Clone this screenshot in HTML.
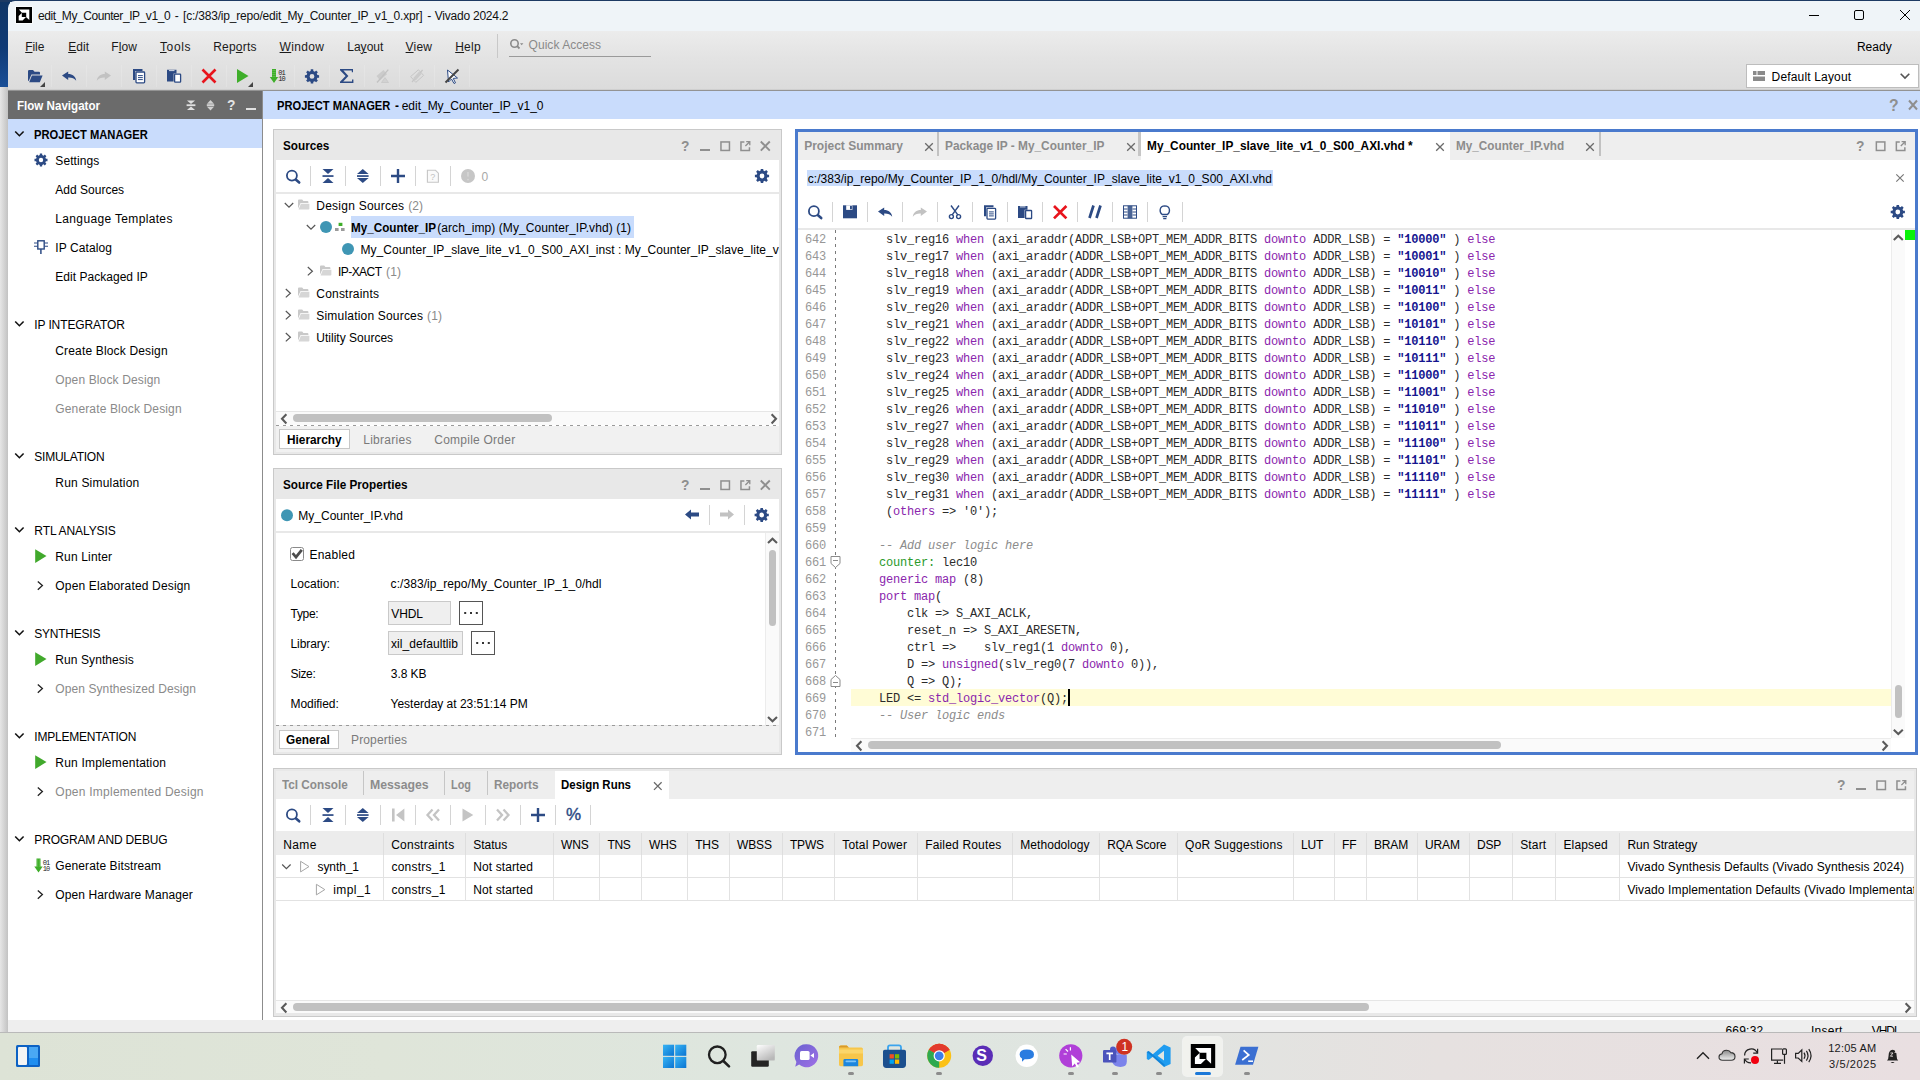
<!DOCTYPE html>
<html><head><meta charset="utf-8"><title>Vivado</title>
<style>
*{box-sizing:border-box;margin:0;padding:0}
html,body{width:1920px;height:1080px;overflow:hidden;background:#eeeeee;font-family:"Liberation Sans",Arial,sans-serif;font-size:12px;color:#000}
.b,.a{position:absolute}
.a{white-space:nowrap;line-height:14px}
svg{position:absolute;overflow:visible}
u{text-decoration:underline;text-underline-offset:1px;text-decoration-thickness:1px}
.mono{font-family:"Liberation Mono","Courier New",monospace;font-size:12px;letter-spacing:-0.2px;white-space:pre;color:#2b2b2b}
.kw{color:#8a25ad}
.num{color:#14148f;font-weight:bold}
.cm{color:#8c8c8c;font-style:italic}
.lbl{color:#2a9a2a}
</style></head><body>
<div class="b" style="left:0px;top:0px;width:8px;height:1033px;background:linear-gradient(90deg,#e6e6e6,#c2c2c2)"></div>
<div class="b" style="left:0px;top:0px;width:10px;height:87px;background:linear-gradient(180deg,#0f3565 0%,#0f3a75 55%,#1a4f97 100%)"></div>
<div class="b" style="left:0px;top:0px;width:1920px;height:2px;background:#1d3a63"></div>
<div class="b" style="left:8px;top:1px;width:1912px;height:30px;background:#eff4f8;border-top-left-radius:7px"></div>
<svg style="left:16px;top:7px" width="16" height="16" viewBox="0 0 16 16"><rect x="-0.7" y="-0.7" width="17.4" height="17.4" fill="#fff"/><rect width="16" height="16" fill="#000"/><path d="M2.9 2.6H13.3V13.1L10.2 10.2V5.8H5.9Z M2.7 8.9L5.8 6V10H10L6.6 13.4H2.7Z" fill="#fff"/></svg>
<div class="a" style="left:38.00px;top:9.00px;letter-spacing:-0.432px;color:#111;">edit_My_Counter_IP_v1_0</div>
<div class="a" style="left:174.80px;top:9.00px;letter-spacing:0.160px;color:#111;">-</div>
<div class="a" style="left:183.00px;top:9.00px;letter-spacing:-0.199px;color:#111;">[c:/383/ip_repo/edit_My_Counter_IP_v1_0.xpr]</div>
<div class="a" style="left:427.20px;top:9.00px;letter-spacing:0.160px;color:#111;">-</div>
<div class="a" style="left:434.80px;top:9.00px;letter-spacing:-0.233px;color:#111;">Vivado 2024.2</div>
<svg style="left:1808px;top:9px" width="12" height="12" viewBox="0 0 12 12"><path d="M1 6.5H11" stroke="#000" stroke-width="1" fill="none"/></svg>
<svg style="left:1853px;top:9px" width="12" height="12" viewBox="0 0 12 12"><rect x="1.5" y="1.5" width="9" height="9" rx="1.5" stroke="#000" stroke-width="1" fill="none"/></svg>
<svg style="left:1899px;top:9px" width="12" height="12" viewBox="0 0 12 12"><path d="M1 1L11 11M11 1L1 11" stroke="#000" stroke-width="1" fill="none"/></svg>
<div class="b" style="left:8px;top:31px;width:1912px;height:60px;background:linear-gradient(180deg,#ececec 0%,#e3e3e3 45%,#dbdbdb 100%)"></div>
<div class="b" style="left:8px;top:89px;width:1912px;height:1px;background:#cfcfcf"></div>
<div class="b" style="left:8px;top:90px;width:1912px;height:1px;background:#939393"></div>
<div class="a" style="left:25.20px;top:40.00px;letter-spacing:-0.050px;color:#1a1a1a;"><u>F</u>ile</div>
<div class="a" style="left:68.20px;top:40.00px;letter-spacing:0.100px;color:#1a1a1a;"><u>E</u>dit</div>
<div class="a" style="left:111.20px;top:40.00px;letter-spacing:0.150px;color:#1a1a1a;">F<u>l</u>ow</div>
<div class="a" style="left:160.00px;top:40.00px;letter-spacing:0.600px;color:#1a1a1a;"><u>T</u>ools</div>
<div class="a" style="left:213.20px;top:40.00px;letter-spacing:0.200px;color:#1a1a1a;">Rep<u>o</u>rts</div>
<div class="a" style="left:279.60px;top:40.00px;letter-spacing:0.340px;color:#1a1a1a;"><u>W</u>indow</div>
<div class="a" style="left:347.20px;top:40.00px;letter-spacing:0.030px;color:#1a1a1a;">La<u>y</u>out</div>
<div class="a" style="left:405.60px;top:40.00px;letter-spacing:0.183px;color:#1a1a1a;"><u>V</u>iew</div>
<div class="a" style="left:455.20px;top:40.00px;letter-spacing:0.233px;color:#1a1a1a;"><u>H</u>elp</div>
<div class="b" style="left:497px;top:34px;width:1px;height:24px;background:#c8c8c8"></div>
<svg style="left:509px;top:38px" width="14" height="14" viewBox="0 0 14 14"><circle cx="5.5" cy="5.5" r="3.7" stroke="#8a8a8a" stroke-width="1.6" fill="none"/><path d="M8.2 8.2L10.5 10.5" stroke="#8a8a8a" stroke-width="1.8"/><path d="M11 5.2h3.4l-1.7 2.1z" fill="#8a8a8a"/></svg>
<div class="a" style="left:528.60px;top:38.00px;letter-spacing:0.032px;color:#8a8a8a;">Quick Access</div>
<div class="b" style="left:509px;top:56px;width:142px;height:1px;background:#9a9a9a"></div>
<div class="a" style="left:1856.90px;top:40.00px;letter-spacing:0.050px;">Ready</div>
<svg style="left:0;top:0" width="1" height="1"><g transform="translate(28,70)"><path d="M0 1.2Q0 0 1.2 0H5L6.6 1.8H11Q12 1.8 12 2.8V4.6H3.4L0.8 11Q0 11 0 10Z" fill="#2c4a84"/><path d="M3.9 5.6H14.6L11.8 12.2H1.2Z" fill="#2c4a84"/></g></svg>
<svg style="left:0;top:0" width="1" height="1"><path d="M45 82V87H40Z" fill="#444"/></svg>
<svg style="left:0;top:0" width="1" height="1"><g transform="translate(62,71.5)"><path d="M0 4L6.2 0V2.6C10.5 2.6 13.6 5 14.2 9.2C12.3 6.6 9.8 5.8 6.2 5.9V8.4Z" fill="#2c4a84"/></g></svg>
<svg style="left:0;top:0" width="1" height="1"><g transform="translate(111,71.5) scale(-1,1)"><path d="M0 4L6.2 0V2.6C10.5 2.6 13.6 5 14.2 9.2C12.3 6.6 9.8 5.8 6.2 5.9V8.4Z" fill="#c2c2c2"/></g></svg>
<svg style="left:0;top:0" width="1" height="1"><g transform="translate(133,69)"><path d="M0 0H9.5V2H2.2V11H0Z" fill="#2c4a84"/><rect x="3" y="3" width="8.6" height="10.8" rx="0.8" fill="#fff" stroke="#2c4a84" stroke-width="1.3"/><path d="M5 6.6H9.8M5 8.6H9.8M5 10.6H9.8" stroke="#2c4a84" stroke-width="1"/></g></svg>
<svg style="left:0;top:0" width="1" height="1"><g transform="translate(167,69)"><path d="M0 0.8H9.5V4.4H6.6V12.6H0Z" fill="#2c4a84"/><path d="M2 1.6H7.5" stroke="#fff" stroke-width="0.8"/><rect x="7.6" y="5.2" width="6" height="8" rx="0.6" fill="#fff" stroke="#2c4a84" stroke-width="1.3"/></g></svg>
<svg style="left:0;top:0" width="1" height="1"><path d="M202.5 69.5L215.5 82.5M215.5 69.5L202.5 82.5" stroke="#e8141c" stroke-width="2.6" fill="none"/></svg>
<svg style="left:0;top:0" width="1" height="1"><path d="M237 69L248.5 76.0L237 83Z" fill="#3fae2a"/></svg>
<svg style="left:0;top:0" width="1" height="1"><path d="M253 82V87H248Z" fill="#444"/></svg>
<svg style="left:0;top:0" width="1" height="1"><g transform="translate(270,69)"><path d="M2 0H6V8H8.2L4 14L-0.2 8H2Z" fill="#3fae2a"/><path d="M2.6 1.5H5.4M2.6 3.5H5.4M2.6 5.5H5.4M2.6 7.5H5.4" stroke="#7fd06a" stroke-width="0.8" stroke-dasharray="1 0.8"/><text x="8.2" y="6.2" font-family="Liberation Mono,monospace" font-size="7" fill="#1a1a1a" letter-spacing="-0.9">01</text><text x="8.2" y="12.2" font-family="Liberation Mono,monospace" font-size="7" fill="#1a1a1a" letter-spacing="-0.9">10</text></g></svg>
<svg style="left:0;top:0" width="1" height="1"><path d="M319.09,75.16 L319.09,77.64 L317.38,77.74 L316.75,79.26 L317.89,80.54 L316.14,82.29 L314.86,81.15 L313.34,81.78 L313.24,83.49 L310.76,83.49 L310.66,81.78 L309.14,81.15 L307.86,82.29 L306.11,80.54 L307.25,79.26 L306.62,77.74 L304.91,77.64 L304.91,75.16 L306.62,75.06 L307.25,73.54 L306.11,72.26 L307.86,70.51 L309.14,71.65 L310.66,71.02 L310.76,69.31 L313.24,69.31 L313.34,71.02 L314.86,71.65 L316.14,70.51 L317.89,72.26 L316.75,73.54 L317.38,75.06ZM314.38,76.4A2.38,2.38 0 1 0 309.62,76.4A2.38,2.38 0 1 0 314.38,76.4Z" fill="#2c4a84" fill-rule="evenodd"/></svg>
<svg style="left:0;top:0" width="1" height="1"><path d="M340 69H353V72.2H351.8V70.6H343.4L348.4 76L343.2 81.4H352V79.6H353.4V83H340V81.8L345.6 76L340 70.2Z" fill="#2c4a84"/></svg>
<svg style="left:0;top:0" width="1" height="1"><g><path d="M376.5 76L383.5 70L387 74.2L380 80.2Z" fill="#cbcbcb"/><path d="M377 82.5L388.3 69.6" stroke="#c2c2c2" stroke-width="1.4" fill="none"/><path d="M381.5 82.5H388.5L385 77.6Z" fill="#d2d2d2" stroke="#c6c6c6" stroke-width="0.8"/></g></svg>
<svg style="left:0;top:0" width="1" height="1"><g fill="none" stroke="#c6c6c6"><path d="M410.6 76.6L418.4 69.8L423.6 75.4L415.8 82.4Z" stroke-width="1"/><path d="M412 82L422.6 70" stroke-width="1.2"/><path d="M414.4 79.4L420.2 72.8" stroke-width="3.4" stroke="#cbcbcb"/></g></svg>
<svg style="left:0;top:0" width="1" height="1"><path d="M447.5 70L448.5 82L451.5 79L454 83.5L455.5 82.8L453.2 78.4L457.5 78Z" fill="#fff" stroke="#2c4a84" stroke-width="1"/><path d="M445.5 82.5L458.5 69.5" stroke="#444" stroke-width="2"/></svg>
<div class="b" style="left:51px;top:65px;width:1px;height:22px;background:rgba(255,255,255,0.16)"></div>
<div class="b" style="left:86px;top:65px;width:1px;height:22px;background:rgba(255,255,255,0.16)"></div>
<div class="b" style="left:121px;top:65px;width:1px;height:22px;background:rgba(255,255,255,0.16)"></div>
<div class="b" style="left:156px;top:65px;width:1px;height:22px;background:rgba(255,255,255,0.16)"></div>
<div class="b" style="left:191px;top:65px;width:1px;height:22px;background:rgba(255,255,255,0.16)"></div>
<div class="b" style="left:226px;top:65px;width:1px;height:22px;background:rgba(255,255,255,0.16)"></div>
<div class="b" style="left:294px;top:65px;width:1px;height:22px;background:rgba(255,255,255,0.16)"></div>
<div class="b" style="left:329px;top:65px;width:1px;height:22px;background:rgba(255,255,255,0.16)"></div>
<div class="b" style="left:364px;top:65px;width:1px;height:22px;background:rgba(255,255,255,0.16)"></div>
<div class="b" style="left:399px;top:65px;width:1px;height:22px;background:rgba(255,255,255,0.16)"></div>
<div class="b" style="left:434px;top:65px;width:1px;height:22px;background:rgba(255,255,255,0.16)"></div>
<div class="b" style="left:469px;top:65px;width:1px;height:22px;background:rgba(255,255,255,0.16)"></div>
<div class="b" style="left:1746px;top:64px;width:173px;height:24px;background:#fff;border:1px solid #bdbdbd"></div>
<svg style="left:1753px;top:71px" width="12" height="10" viewBox="0 0 12 10"><rect x="0" y="0" width="3.5" height="4" fill="#8a8a8a"/><rect x="4.5" y="0" width="7.5" height="4" fill="#8a8a8a"/><rect x="0" y="5.5" width="12" height="4.5" fill="#8a8a8a"/></svg>
<div class="a" style="left:1771.60px;top:69.80px;letter-spacing:0.160px;">Default Layout</div>
<svg style="left:1900px;top:73px" width="10" height="6" viewBox="0 0 10 6"><path d="M0.7 0.7L5 5L9.3 0.7" stroke="#555" stroke-width="1.6" fill="none"/></svg>
<div class="b" style="left:8px;top:91px;width:255px;height:929px;background:#fff"></div>
<div class="b" style="left:262px;top:91px;width:1px;height:929px;background:#8c8c8c"></div>
<div class="b" style="left:8px;top:91px;width:254px;height:28px;background:#6b6b6b"></div>
<div class="a" style="left:17.00px;top:99.00px;font-weight:bold;transform:scaleX(0.9651);transform-origin:0 0;color:#fff;">Flow Navigator</div>
<svg style="left:0;top:0" width="1" height="1"><g fill="#e0e0e0"><path d="M187 100.5h8l-4 3.6z"/><rect x="186.6" y="104.3" width="8.8" height="1.8"/><path d="M187 110h8l-4-3.6z"/></g></svg>
<svg style="left:0;top:0" width="1" height="1"><g fill="#d0d0d0"><path d="M207 103.8h7l-3.5-3.8z"/><rect x="206.8" y="104.2" width="7.4" height="2"/><path d="M207 106.8h7l-3.5 3.8z"/></g></svg>
<div class="a" style="left:226.60px;top:98.31px;font-size:14px;font-weight:bold;transform:scaleX(0.9850);transform-origin:0 0;color:#e4e4e4;">?</div>
<div class="b" style="left:246px;top:108px;width:10px;height:2px;background:#e0e0e0"></div>
<div class="b" style="left:8px;top:119px;width:254px;height:29px;background:#c9dcfc"></div>
<svg style="left:0;top:0" width="1" height="1"><path d="M15.2 131.5L19.4 135.7L23.6 131.5" stroke="#111" stroke-width="1.6" fill="none"/></svg>
<div class="a" style="left:34.30px;top:128.00px;font-weight:bold;transform:scaleX(0.9320);transform-origin:0 0;">PROJECT MANAGER</div>
<div class="a" style="left:55.30px;top:154.00px;letter-spacing:0.093px;">Settings</div>
<svg style="left:0;top:0" width="1" height="1"><path d="M47.50,158.87 L47.50,161.13 L45.93,161.23 L45.35,162.62 L46.40,163.80 L44.80,165.40 L43.62,164.35 L42.23,164.93 L42.13,166.50 L39.87,166.50 L39.77,164.93 L38.38,164.35 L37.20,165.40 L35.60,163.80 L36.65,162.62 L36.07,161.23 L34.50,161.13 L34.50,158.87 L36.07,158.77 L36.65,157.38 L35.60,156.20 L37.20,154.60 L38.38,155.65 L39.77,155.07 L39.87,153.50 L42.13,153.50 L42.23,155.07 L43.62,155.65 L44.80,154.60 L46.40,156.20 L45.35,157.38 L45.93,158.77ZM43.18,160A2.18,2.18 0 1 0 38.82,160A2.18,2.18 0 1 0 43.18,160Z" fill="#2c4a84" fill-rule="evenodd"/></svg>
<div class="a" style="left:55.30px;top:183.00px;letter-spacing:0.010px;">Add Sources</div>
<div class="a" style="left:55.30px;top:212.00px;letter-spacing:0.347px;">Language Templates</div>
<div class="a" style="left:55.30px;top:241.00px;letter-spacing:0.089px;">IP Catalog</div>
<svg style="left:0;top:0" width="1" height="1"><g stroke="#2c4a84" fill="none" stroke-width="1.4"><rect x="37.8" y="240.8" width="6.4" height="8.2"/><path d="M40.9 249V254" stroke-width="1.5"/><path d="M34 243h3.4M34 246.3h3.4M44.6 243h3.4M44.6 246.3h3.4" stroke-width="1.1"/></g></svg>
<div class="a" style="left:55.30px;top:270.00px;letter-spacing:0.030px;">Edit Packaged IP</div>
<svg style="left:0;top:0" width="1" height="1"><path d="M15.2 321.5L19.4 325.7L23.6 321.5" stroke="#111" stroke-width="1.6" fill="none"/></svg>
<div class="a" style="left:34.30px;top:318.00px;letter-spacing:-0.117px;">IP INTEGRATOR</div>
<div class="a" style="left:55.30px;top:344.00px;letter-spacing:0.161px;">Create Block Design</div>
<div class="a" style="left:55.30px;top:373.00px;letter-spacing:0.134px;color:#8a8a8a;">Open Block Design</div>
<div class="a" style="left:55.30px;top:402.00px;letter-spacing:0.145px;color:#8a8a8a;">Generate Block Design</div>
<svg style="left:0;top:0" width="1" height="1"><path d="M15.2 453.5L19.4 457.7L23.6 453.5" stroke="#111" stroke-width="1.6" fill="none"/></svg>
<div class="a" style="left:34.30px;top:450.00px;letter-spacing:-0.239px;">SIMULATION</div>
<div class="a" style="left:55.30px;top:476.00px;letter-spacing:0.192px;">Run Simulation</div>
<svg style="left:0;top:0" width="1" height="1"><path d="M15.2 527.5L19.4 531.7L23.6 527.5" stroke="#111" stroke-width="1.6" fill="none"/></svg>
<div class="a" style="left:34.30px;top:524.00px;letter-spacing:-0.091px;">RTL ANALYSIS</div>
<div class="a" style="left:55.30px;top:550.00px;letter-spacing:0.150px;">Run Linter</div>
<svg style="left:0;top:0" width="1" height="1"><path d="M35.2 549.3L46.5 556.0999999999999L35.2 562.9Z" fill="#41a92c"/></svg>
<div class="a" style="left:55.30px;top:579.00px;letter-spacing:0.169px;">Open Elaborated Design</div>
<svg style="left:0;top:0" width="1" height="1"><path d="M37.8 581.4L42.4 585.6L37.8 589.8" stroke="#222" stroke-width="1.3" fill="none"/></svg>
<svg style="left:0;top:0" width="1" height="1"><path d="M15.2 630.5L19.4 634.7L23.6 630.5" stroke="#111" stroke-width="1.6" fill="none"/></svg>
<div class="a" style="left:34.30px;top:627.00px;letter-spacing:-0.237px;">SYNTHESIS</div>
<div class="a" style="left:55.30px;top:653.00px;letter-spacing:0.083px;">Run Synthesis</div>
<svg style="left:0;top:0" width="1" height="1"><path d="M35.2 652.3L46.5 659.0999999999999L35.2 665.9Z" fill="#41a92c"/></svg>
<div class="a" style="left:55.30px;top:682.00px;letter-spacing:0.089px;color:#8a8a8a;">Open Synthesized Design</div>
<svg style="left:0;top:0" width="1" height="1"><path d="M37.8 684.4L42.4 688.6L37.8 692.8" stroke="#222" stroke-width="1.3" fill="none"/></svg>
<svg style="left:0;top:0" width="1" height="1"><path d="M15.2 733.5L19.4 737.7L23.6 733.5" stroke="#111" stroke-width="1.6" fill="none"/></svg>
<div class="a" style="left:34.30px;top:730.00px;letter-spacing:-0.215px;">IMPLEMENTATION</div>
<div class="a" style="left:55.30px;top:756.00px;letter-spacing:0.194px;">Run Implementation</div>
<svg style="left:0;top:0" width="1" height="1"><path d="M35.2 755.3L46.5 762.0999999999999L35.2 768.9Z" fill="#41a92c"/></svg>
<div class="a" style="left:55.30px;top:785.00px;letter-spacing:0.248px;color:#8a8a8a;">Open Implemented Design</div>
<svg style="left:0;top:0" width="1" height="1"><path d="M37.8 787.4L42.4 791.6L37.8 795.8" stroke="#222" stroke-width="1.3" fill="none"/></svg>
<svg style="left:0;top:0" width="1" height="1"><path d="M15.2 836.5L19.4 840.7L23.6 836.5" stroke="#111" stroke-width="1.6" fill="none"/></svg>
<div class="a" style="left:34.30px;top:833.00px;letter-spacing:-0.169px;">PROGRAM AND DEBUG</div>
<div class="a" style="left:55.30px;top:859.00px;letter-spacing:0.103px;">Generate Bitstream</div>
<svg style="left:0;top:0" width="1" height="1"><g transform="translate(34.5,858.5)"><path d="M2 0H6V8H8.2L4 14L-0.2 8H2Z" fill="#3fae2a"/><path d="M2.6 1.5H5.4M2.6 3.5H5.4M2.6 5.5H5.4M2.6 7.5H5.4" stroke="#7fd06a" stroke-width="0.8" stroke-dasharray="1 0.8"/><text x="8.2" y="6.2" font-family="Liberation Mono,monospace" font-size="7" fill="#1a1a1a" letter-spacing="-0.9">01</text><text x="8.2" y="12.2" font-family="Liberation Mono,monospace" font-size="7" fill="#1a1a1a" letter-spacing="-0.9">10</text></g></svg>
<div class="a" style="left:55.30px;top:888.00px;letter-spacing:0.105px;">Open Hardware Manager</div>
<svg style="left:0;top:0" width="1" height="1"><path d="M37.8 890.4L42.4 894.6L37.8 898.8" stroke="#222" stroke-width="1.3" fill="none"/></svg>
<div class="b" style="left:263px;top:91px;width:1657px;height:28px;background:#c9dcfc"></div>
<div class="b" style="left:263px;top:119px;width:1657px;height:901px;background:#fff"></div>
<div class="a" style="left:277.30px;top:99.00px;font-weight:bold;transform:scaleX(0.9287);transform-origin:0 0;">PROJECT MANAGER</div>
<div class="a" style="left:395.20px;top:99.00px;font-weight:bold;transform:scaleX(0.9850);transform-origin:0 0;">-</div>
<div class="a" style="left:401.70px;top:99.00px;letter-spacing:-0.014px;">edit_My_Counter_IP_v1_0</div>
<div class="a" style="left:1889.00px;top:98.52px;font-size:16px;font-weight:bold;transform:scaleX(0.9850);transform-origin:0 0;color:#8f8f8f;">?</div>
<svg style="left:0;top:0" width="1" height="1"><path d="M1909 100.5L1917 109.5M1917 100.5L1909 109.5" stroke="#8f8f8f" stroke-width="2" fill="none"/></svg>
<div class="b" style="left:273px;top:129px;width:509px;height:326px;background:#e8e8e8;border:1px solid #c9c9c9"></div>
<div class="a" style="left:283.00px;top:139.00px;font-weight:bold;transform:scaleX(0.9799);transform-origin:0 0;">Sources</div>
<div class="a" style="left:681.00px;top:139.11px;font-size:14px;font-weight:bold;transform:scaleX(0.9850);transform-origin:0 0;color:#8f8f8f;">?</div>
<div class="b" style="left:700px;top:149px;width:10px;height:2px;background:#8f8f8f"></div>
<svg style="left:0;top:0" width="1" height="1"><rect x="720.95" y="141.95" width="8.5" height="8.5" fill="none" stroke="#8f8f8f" stroke-width="1.5"/></svg>
<svg style="left:0;top:0" width="1" height="1"><path d="M744.4000000000001 141.95H740.95V150.45H749.45V147.2" fill="none" stroke="#8f8f8f" stroke-width="1.5"/><path d="M745.4000000000001 146.0L749.2 142.2M746.2 141.6H749.8000000000001V145.2" fill="none" stroke="#8f8f8f" stroke-width="1.3"/></svg>
<svg style="left:0;top:0" width="1" height="1"><path d="M760.8000000000001 141.5L769.8000000000001 150.7M769.8000000000001 141.5L760.8000000000001 150.7" stroke="#8f8f8f" stroke-width="1.9" fill="none"/></svg>
<div class="b" style="left:276px;top:160px;width:503px;height:32px;background:#fff"></div>
<div class="b" style="left:276px;top:194px;width:503px;height:232px;background:#fff"></div>
<svg style="left:0;top:0" width="1" height="1"><circle cx="291.9" cy="175.6" r="5" fill="none" stroke="#2c4a84" stroke-width="1.8"/><path d="M296 179.7L299.2 182.5" stroke="#2c4a84" stroke-width="2.6" stroke-linecap="round"/></svg>
<div class="b" style="left:310px;top:166px;width:1px;height:20px;background:#d4d4d4"></div>
<svg style="left:0;top:0" width="1" height="1"><g fill="#2c4a84"><path d="M322.5 169h11l-5.5 5z"/><rect x="322.5" y="175.2" width="11" height="1.7"/><path d="M322.5 183h11l-5.5 -5z"/></g></svg>
<div class="b" style="left:345px;top:166px;width:1px;height:20px;background:#d4d4d4"></div>
<svg style="left:0;top:0" width="1" height="1"><g fill="#2c4a84"><path d="M357 174h11.6l-5.8 -5z"/><rect x="357" y="175.2" width="11.6" height="1.7"/><path d="M357 178h11.6l-5.8 5z"/></g></svg>
<div class="b" style="left:380px;top:166px;width:1px;height:20px;background:#d4d4d4"></div>
<svg style="left:0;top:0" width="1" height="1"><path d="M391 176.0H405M398.0 169V183" stroke="#2c4a84" stroke-width="2.4" fill="none"/></svg>
<div class="b" style="left:415px;top:166px;width:1px;height:20px;background:#d4d4d4"></div>
<svg style="left:0;top:0" width="1" height="1"><path d="M427.4 170.3H435.5L438.4 173.2V182.3H427.4Z" fill="#fafafa" stroke="#c6c6c6" stroke-width="1.1"/></svg>
<div class="a" style="left:430.30px;top:170.04px;font-size:9px;letter-spacing:0.160px;color:#c2c2c2;">?</div>
<div class="b" style="left:450px;top:166px;width:1px;height:20px;background:#d4d4d4"></div>
<svg style="left:0;top:0" width="1" height="1"><circle cx="468" cy="176" r="7" fill="#c6c6c6"/><path d="M468 172v4.6" stroke="#d6d6d6" stroke-width="1.6"/><circle cx="468" cy="179.6" r="0.9" fill="#d6d6d6"/></svg>
<div class="a" style="left:481.50px;top:169.60px;letter-spacing:0.160px;color:#a8a8a8;">0</div>
<svg style="left:0;top:0" width="1" height="1"><path d="M769.09,174.76 L769.09,177.24 L767.38,177.34 L766.75,178.86 L767.89,180.14 L766.14,181.89 L764.86,180.75 L763.34,181.38 L763.24,183.09 L760.76,183.09 L760.66,181.38 L759.14,180.75 L757.86,181.89 L756.11,180.14 L757.25,178.86 L756.62,177.34 L754.91,177.24 L754.91,174.76 L756.62,174.66 L757.25,173.14 L756.11,171.86 L757.86,170.11 L759.14,171.25 L760.66,170.62 L760.76,168.91 L763.24,168.91 L763.34,170.62 L764.86,171.25 L766.14,170.11 L767.89,171.86 L766.75,173.14 L767.38,174.66ZM764.38,176A2.38,2.38 0 1 0 759.62,176A2.38,2.38 0 1 0 764.38,176Z" fill="#2c4a84" fill-rule="evenodd"/></svg>
<svg style="left:0;top:0" width="1" height="1"><path d="M284.8 203L289.0 207.2L293.2 203" stroke="#555" stroke-width="1.2" fill="none"/></svg>
<svg style="left:0;top:0" width="1" height="1"><g transform="translate(298,199.5)"><path d="M0 1Q0 0 1 0H4.2L5.4 1.4H9.5Q10.4 1.4 10.4 2.4V3.4H2.6L0 9Z" fill="#c9c9c9"/><path d="M2.9 4.2H11.4V9.3Q11.4 10 10.6 10H0.6Z" fill="#d6d6d6"/></g></svg>
<div class="a" style="left:316.30px;top:199.00px;letter-spacing:0.238px;">Design Sources</div>
<div class="a" style="left:408.20px;top:199.00px;letter-spacing:0.075px;color:#8a8a8a;">(2)</div>
<svg style="left:0;top:0" width="1" height="1"><path d="M306.8 225L311.0 229.2L315.2 225" stroke="#555" stroke-width="1.2" fill="none"/></svg>
<svg style="left:0;top:0" width="1" height="1"><circle cx="326" cy="227" r="6" fill="#3f96b4"/></svg>
<svg style="left:0;top:0" width="1" height="1"><rect x="338.6" y="222.8" width="3.8" height="3.2" fill="#3fae2a"/><rect x="335" y="228" width="3.6" height="3" fill="#9a9a9a"/><rect x="341" y="228" width="3.6" height="3" fill="#9a9a9a"/></svg>
<div class="b" style="left:351px;top:216px;width:283px;height:22px;background:#c9dcfc"></div>
<div class="a" style="left:351.20px;top:221.00px;font-weight:bold;transform:scaleX(0.9742);transform-origin:0 0;">My_Counter_IP</div>
<div class="a" style="left:437.20px;top:221.00px;letter-spacing:0.079px;">(arch_imp) (My_Counter_IP.vhd) (1)</div>
<svg style="left:0;top:0" width="1" height="1"><circle cx="348" cy="249" r="6" fill="#3f96b4"/></svg>
<div class="b" style="left:276px;top:238px;width:503px;height:22px;overflow:hidden">

<div class="a" style="left:84.40px;top:5.00px;letter-spacing:0.050px;">My_Counter_IP_slave_lite_v1_0_S00_AXI_inst : My_Counter_IP_slave_lite_v1_0_S00_AXI</div>
</div>
<svg style="left:0;top:0" width="1" height="1"><path d="M307.8 267L312.40000000000003 271.2L307.8 275.4" stroke="#555" stroke-width="1.2" fill="none"/></svg>
<svg style="left:0;top:0" width="1" height="1"><g transform="translate(320,265.5)"><path d="M0 1Q0 0 1 0H4.2L5.4 1.4H9.5Q10.4 1.4 10.4 2.4V3.4H2.6L0 9Z" fill="#c9c9c9"/><path d="M2.9 4.2H11.4V9.3Q11.4 10 10.6 10H0.6Z" fill="#d6d6d6"/></g></svg>
<div class="a" style="left:338.00px;top:265.00px;letter-spacing:-0.558px;">IP-XACT</div>
<div class="a" style="left:386.00px;top:265.00px;letter-spacing:0.175px;color:#8a8a8a;">(1)</div>
<svg style="left:0;top:0" width="1" height="1"><path d="M285.8 289L290.40000000000003 293.2L285.8 297.4" stroke="#555" stroke-width="1.2" fill="none"/></svg>
<svg style="left:0;top:0" width="1" height="1"><g transform="translate(298,287.5)"><path d="M0 1Q0 0 1 0H4.2L5.4 1.4H9.5Q10.4 1.4 10.4 2.4V3.4H2.6L0 9Z" fill="#c9c9c9"/><path d="M2.9 4.2H11.4V9.3Q11.4 10 10.6 10H0.6Z" fill="#d6d6d6"/></g></svg>
<div class="a" style="left:316.30px;top:287.00px;letter-spacing:0.200px;">Constraints</div>
<svg style="left:0;top:0" width="1" height="1"><path d="M285.8 311L290.40000000000003 315.2L285.8 319.4" stroke="#555" stroke-width="1.2" fill="none"/></svg>
<svg style="left:0;top:0" width="1" height="1"><g transform="translate(298,309.5)"><path d="M0 1Q0 0 1 0H4.2L5.4 1.4H9.5Q10.4 1.4 10.4 2.4V3.4H2.6L0 9Z" fill="#c9c9c9"/><path d="M2.9 4.2H11.4V9.3Q11.4 10 10.6 10H0.6Z" fill="#d6d6d6"/></g></svg>
<div class="a" style="left:316.30px;top:309.00px;letter-spacing:0.194px;">Simulation Sources</div>
<div class="a" style="left:427.00px;top:309.00px;letter-spacing:0.175px;color:#8a8a8a;">(1)</div>
<svg style="left:0;top:0" width="1" height="1"><path d="M285.8 333L290.40000000000003 337.2L285.8 341.4" stroke="#555" stroke-width="1.2" fill="none"/></svg>
<svg style="left:0;top:0" width="1" height="1"><g transform="translate(298,331.5)"><path d="M0 1Q0 0 1 0H4.2L5.4 1.4H9.5Q10.4 1.4 10.4 2.4V3.4H2.6L0 9Z" fill="#c9c9c9"/><path d="M2.9 4.2H11.4V9.3Q11.4 10 10.6 10H0.6Z" fill="#d6d6d6"/></g></svg>
<div class="a" style="left:316.30px;top:331.00px;letter-spacing:0.007px;">Utility Sources</div>
<div class="b" style="left:276px;top:411px;width:503px;height:14px;background:#fafafa;border-top:1px solid #e6e6e6"></div>
<div class="b" style="left:276px;top:426px;width:503px;height:26px;background:#f1f1f1"></div>
<svg style="left:0;top:0" width="1" height="1"><path d="M286.4 414.2L282 418.8L286.4 423.40000000000003" stroke="#5a5a5a" stroke-width="2.1" fill="none"/><path d="M771.6 414.2L776 418.8L771.6 423.40000000000003" stroke="#5a5a5a" stroke-width="2.1" fill="none"/></svg>
<div class="b" style="left:293px;top:414px;width:259px;height:8px;background:#c1c1c1;border-radius:4px"></div>
<div class="b" style="left:276px;top:425px;width:503px;height:1px;background:repeating-linear-gradient(90deg,#9a9a9a 0 3px,transparent 3px 7px)"></div>
<div class="b" style="left:279px;top:429px;width:71px;height:20px;background:#fff;border:1px solid #c8c8c8"></div>
<div class="a" style="left:287.00px;top:433.00px;font-weight:bold;transform:scaleX(0.9846);transform-origin:0 0;">Hierarchy</div>
<div class="a" style="left:363.20px;top:433.00px;letter-spacing:0.275px;color:#7a7a7a;">Libraries</div>
<div class="a" style="left:434.30px;top:433.00px;letter-spacing:0.238px;color:#7a7a7a;">Compile Order</div>
<div class="b" style="left:273px;top:468px;width:509px;height:287px;background:#e8e8e8;border:1px solid #c9c9c9"></div>
<div class="a" style="left:283.00px;top:478.00px;font-weight:bold;transform:scaleX(0.9772);transform-origin:0 0;">Source File Properties</div>
<div class="a" style="left:681.00px;top:478.11px;font-size:14px;font-weight:bold;transform:scaleX(0.9850);transform-origin:0 0;color:#8f8f8f;">?</div>
<div class="b" style="left:700px;top:488px;width:10px;height:2px;background:#8f8f8f"></div>
<svg style="left:0;top:0" width="1" height="1"><rect x="720.95" y="480.95" width="8.5" height="8.5" fill="none" stroke="#8f8f8f" stroke-width="1.5"/></svg>
<svg style="left:0;top:0" width="1" height="1"><path d="M744.4000000000001 480.95H740.95V489.45H749.45V486.2" fill="none" stroke="#8f8f8f" stroke-width="1.5"/><path d="M745.4000000000001 485.0L749.2 481.2M746.2 480.59999999999997H749.8000000000001V484.2" fill="none" stroke="#8f8f8f" stroke-width="1.3"/></svg>
<svg style="left:0;top:0" width="1" height="1"><path d="M760.8000000000001 480.5L769.8000000000001 489.7M769.8000000000001 480.5L760.8000000000001 489.7" stroke="#8f8f8f" stroke-width="1.9" fill="none"/></svg>
<div class="b" style="left:276px;top:499px;width:503px;height:32px;background:#fff"></div>
<div class="b" style="left:276px;top:533px;width:503px;height:192px;background:#fff"></div>
<svg style="left:0;top:0" width="1" height="1"><circle cx="287" cy="515.3" r="6" fill="#3f96b4"/></svg>
<div class="a" style="left:298.30px;top:508.70px;">My_Counter_IP.vhd</div>
<svg style="left:0;top:0" width="1" height="1"><g transform="translate(685,509.5)"><path d="M0 5L6 0V3H14V7H6V10Z" fill="#2c4a84"/></g></svg>
<div class="b" style="left:709px;top:505px;width:1px;height:20px;background:#d4d4d4"></div>
<svg style="left:0;top:0" width="1" height="1"><g transform="translate(734,509.5) scale(-1,1)"><path d="M0 5L6 0V3H14V7H6V10Z" fill="#c2c2c2"/></g></svg>
<div class="b" style="left:744px;top:505px;width:1px;height:20px;background:#d4d4d4"></div>
<svg style="left:0;top:0" width="1" height="1"><path d="M768.79,513.76 L768.79,516.24 L767.08,516.34 L766.45,517.86 L767.59,519.14 L765.84,520.89 L764.56,519.75 L763.04,520.38 L762.94,522.09 L760.46,522.09 L760.36,520.38 L758.84,519.75 L757.56,520.89 L755.81,519.14 L756.95,517.86 L756.32,516.34 L754.61,516.24 L754.61,513.76 L756.32,513.66 L756.95,512.14 L755.81,510.86 L757.56,509.11 L758.84,510.25 L760.36,509.62 L760.46,507.91 L762.94,507.91 L763.04,509.62 L764.56,510.25 L765.84,509.11 L767.59,510.86 L766.45,512.14 L767.08,513.66ZM764.08,515A2.38,2.38 0 1 0 759.32,515A2.38,2.38 0 1 0 764.08,515Z" fill="#2c4a84" fill-rule="evenodd"/></svg>
<div class="b" style="left:290px;top:547px;width:14px;height:14px;background:#fff;border:1px solid #8a8a8a;border-radius:2.5px"></div>
<svg style="left:0;top:0" width="1" height="1"><path d="M292.6 553.2L296 557.2L301.8 549.8" stroke="#4c4c4c" stroke-width="2.7" fill="none"/></svg>
<div class="a" style="left:309.40px;top:547.50px;letter-spacing:0.258px;">Enabled</div>
<div class="a" style="left:290.50px;top:577.00px;letter-spacing:0.037px;">Location:</div>
<div class="a" style="left:390.60px;top:577.00px;letter-spacing:0.060px;">c:/383/ip_repo/My_Counter_IP_1_0/hdl</div>
<div class="a" style="left:290.50px;top:607.00px;letter-spacing:-0.288px;">Type:</div>
<div class="b" style="left:388px;top:601px;width:63px;height:24px;background:#efefef;border:1px solid #c9c9c9"></div>
<div class="a" style="left:391.30px;top:607.00px;letter-spacing:-0.150px;">VHDL</div>
<div class="b" style="left:459px;top:601px;width:24px;height:24px;background:#fff;border:1px solid #555"></div>
<div class="b" style="left:471px;top:631px;width:24px;height:24px;background:#fff;border:1px solid #555"></div>
<svg style="left:0;top:0" width="1" height="1"><g fill="#333"><rect x="464.2" y="612" width="2" height="2"/><rect x="470" y="612" width="2" height="2"/><rect x="475.8" y="612" width="2" height="2"/></g></svg>
<svg style="left:0;top:0" width="1" height="1"><g fill="#333"><rect x="476.2" y="642" width="2" height="2"/><rect x="482" y="642" width="2" height="2"/><rect x="487.8" y="642" width="2" height="2"/></g></svg>
<div class="a" style="left:290.50px;top:637.00px;letter-spacing:-0.071px;">Library:</div>
<div class="b" style="left:388px;top:631px;width:75px;height:24px;background:#efefef;border:1px solid #c9c9c9"></div>
<div class="a" style="left:391.00px;top:637.00px;letter-spacing:0.073px;">xil_defaultlib</div>
<div class="a" style="left:290.50px;top:667.00px;letter-spacing:-0.350px;">Size:</div>
<div class="a" style="left:390.80px;top:667.00px;letter-spacing:-0.050px;">3.8 KB</div>
<div class="a" style="left:290.50px;top:697.00px;letter-spacing:-0.050px;">Modified:</div>
<div class="a" style="left:390.60px;top:697.00px;letter-spacing:-0.024px;">Yesterday at 23:51:14 PM</div>
<div class="b" style="left:765px;top:533px;width:14px;height:192px;background:#fafafa;border-left:1px solid #ececec"></div>
<svg style="left:0;top:0" width="1" height="1"><path d="M768.0 543L772.5 538.8L777.0 543" stroke="#5a5a5a" stroke-width="2.1" fill="none"/><path d="M768.0 717L772.5 721.2L777.0 717" stroke="#5a5a5a" stroke-width="2.1" fill="none"/></svg>
<div class="b" style="left:769.0px;top:549.6px;width:7px;height:76.39999999999998px;background:#c1c1c1;border-radius:3.5px"></div>
<div class="b" style="left:276px;top:726px;width:503px;height:26px;background:#f1f1f1"></div>
<div class="b" style="left:276px;top:725px;width:503px;height:1px;background:repeating-linear-gradient(90deg,#9a9a9a 0 3px,transparent 3px 7px)"></div>
<div class="b" style="left:279px;top:730px;width:60px;height:19px;background:#fff;border:1px solid #c8c8c8"></div>
<div class="a" style="left:286.00px;top:733.00px;font-weight:bold;transform:scaleX(0.9821);transform-origin:0 0;">General</div>
<div class="a" style="left:351.00px;top:733.00px;letter-spacing:0.144px;color:#7a7a7a;">Properties</div>
<div class="b" style="left:795px;top:129px;width:1123px;height:626px;background:#fff;border:3px solid #4a7acd"></div>
<div class="b" style="left:798px;top:132px;width:1117px;height:28px;background:#eeeeee"></div>
<div class="b" style="left:1141px;top:132px;width:309px;height:28px;background:#fff"></div>
<div class="a" style="left:804.20px;top:139.00px;font-weight:bold;color:#8c8c8c;">Project Summary</div>
<div class="a" style="left:945.30px;top:139.00px;font-weight:bold;transform:scaleX(0.9888);transform-origin:0 0;color:#8c8c8c;">Package IP - My_Counter_IP</div>
<div class="a" style="left:1147.30px;top:139.00px;font-weight:bold;transform:scaleX(0.9883);transform-origin:0 0;">My_Counter_IP_slave_lite_v1_0_S00_AXI.vhd *</div>
<div class="a" style="left:1456.30px;top:139.00px;font-weight:bold;transform:scaleX(0.9783);transform-origin:0 0;color:#8c8c8c;">My_Counter_IP.vhd</div>
<svg style="left:0;top:0" width="1" height="1"><path d="M925.2 143.2L932.8000000000001 150.79999999999998M932.8000000000001 143.2L925.2 150.79999999999998" stroke="#6a6a6a" stroke-width="1.3" fill="none"/></svg>
<svg style="left:0;top:0" width="1" height="1"><path d="M1127.2 143.2L1134.8 150.79999999999998M1134.8 143.2L1127.2 150.79999999999998" stroke="#6a6a6a" stroke-width="1.3" fill="none"/></svg>
<svg style="left:0;top:0" width="1" height="1"><path d="M1436.2 143.2L1443.8 150.79999999999998M1443.8 143.2L1436.2 150.79999999999998" stroke="#6a6a6a" stroke-width="1.3" fill="none"/></svg>
<svg style="left:0;top:0" width="1" height="1"><path d="M1586.2 143.2L1593.8 150.79999999999998M1593.8 143.2L1586.2 150.79999999999998" stroke="#6a6a6a" stroke-width="1.3" fill="none"/></svg>
<div class="b" style="left:937px;top:132px;width:2px;height:24px;background:#c2c2c2"></div>
<div class="b" style="left:1138px;top:132px;width:3px;height:24px;background:#c6c6c6"></div>
<div class="b" style="left:1599px;top:132px;width:2px;height:24px;background:#c2c2c2"></div>
<div class="a" style="left:1856.40px;top:139.11px;font-size:14px;font-weight:bold;transform:scaleX(0.9850);transform-origin:0 0;color:#8f8f8f;">?</div>
<svg style="left:0;top:0" width="1" height="1"><rect x="1876.3500000000001" y="141.95" width="8.5" height="8.5" fill="none" stroke="#8f8f8f" stroke-width="1.5"/></svg>
<svg style="left:0;top:0" width="1" height="1"><path d="M1899.8000000000002 141.95H1896.3500000000001V150.45H1904.8500000000001V147.2" fill="none" stroke="#8f8f8f" stroke-width="1.5"/><path d="M1900.8000000000002 146.0L1904.6000000000001 142.2M1901.6000000000001 141.6H1905.2V145.2" fill="none" stroke="#8f8f8f" stroke-width="1.3"/></svg>
<div class="b" style="left:807px;top:170px;width:466px;height:16px;background:#c9dcfc"></div>
<div class="a" style="left:807.80px;top:171.50px;letter-spacing:0.033px;">c:/383/ip_repo/My_Counter_IP_1_0/hdl/My_Counter_IP_slave_lite_v1_0_S00_AXI.vhd</div>
<svg style="left:0;top:0" width="1" height="1"><path d="M1896.3 174.3L1903.7 181.7M1903.7 174.3L1896.3 181.7" stroke="#777" stroke-width="1.15" fill="none"/></svg>
<div class="b" style="left:832px;top:202px;width:1px;height:20px;background:#d4d4d4"></div>
<div class="b" style="left:867px;top:202px;width:1px;height:20px;background:#d4d4d4"></div>
<div class="b" style="left:902px;top:202px;width:1px;height:20px;background:#d4d4d4"></div>
<div class="b" style="left:937px;top:202px;width:1px;height:20px;background:#d4d4d4"></div>
<div class="b" style="left:972px;top:202px;width:1px;height:20px;background:#d4d4d4"></div>
<div class="b" style="left:1007px;top:202px;width:1px;height:20px;background:#d4d4d4"></div>
<div class="b" style="left:1042px;top:202px;width:1px;height:20px;background:#d4d4d4"></div>
<div class="b" style="left:1077px;top:202px;width:1px;height:20px;background:#d4d4d4"></div>
<div class="b" style="left:1112px;top:202px;width:1px;height:20px;background:#d4d4d4"></div>
<div class="b" style="left:1147px;top:202px;width:1px;height:20px;background:#d4d4d4"></div>
<div class="b" style="left:1182px;top:202px;width:1px;height:20px;background:#d4d4d4"></div>
<svg style="left:0;top:0" width="1" height="1"><circle cx="813.9" cy="211.20000000000002" r="5" fill="none" stroke="#2c4a84" stroke-width="1.8"/><path d="M818 215.3L821.2 218.10000000000002" stroke="#2c4a84" stroke-width="2.6" stroke-linecap="round"/></svg>
<svg style="left:0;top:0" width="1" height="1"><g transform="translate(843,205.3)"><path d="M0 0H14V13H0Z" fill="#2c4a84"/><rect x="3.2" y="0" width="6.2" height="4.6" fill="#fff"/><rect x="7" y="0.6" width="1.9" height="3.4" fill="#2c4a84"/></g></svg>
<svg style="left:0;top:0" width="1" height="1"><g transform="translate(878,207.5)"><path d="M0 4L6.2 0V2.6C10.5 2.6 13.6 5 14.2 9.2C12.3 6.6 9.8 5.8 6.2 5.9V8.4Z" fill="#2c4a84"/></g></svg>
<svg style="left:0;top:0" width="1" height="1"><g transform="translate(927,207.5) scale(-1,1)"><path d="M0 4L6.2 0V2.6C10.5 2.6 13.6 5 14.2 9.2C12.3 6.6 9.8 5.8 6.2 5.9V8.4Z" fill="#c2c2c2"/></g></svg>
<svg style="left:0;top:0" width="1" height="1"><g fill="none" stroke="#2c4a84" stroke-width="1.4"><path d="M951 205.5L958 215.2M959 205.5L952 215.2"/><circle cx="951.4" cy="216.6" r="2"/><circle cx="958.6" cy="216.6" r="2"/></g></svg>
<svg style="left:0;top:0" width="1" height="1"><g transform="translate(984,205.3)"><path d="M0 0H9.5V2H2.2V11H0Z" fill="#2c4a84"/><rect x="3" y="3" width="8.6" height="10.8" rx="0.8" fill="#fff" stroke="#2c4a84" stroke-width="1.3"/><path d="M5 6.6H9.8M5 8.6H9.8M5 10.6H9.8" stroke="#2c4a84" stroke-width="1"/></g></svg>
<svg style="left:0;top:0" width="1" height="1"><g transform="translate(1018,205.3)"><path d="M0 0.8H9.5V4.4H6.6V12.6H0Z" fill="#2c4a84"/><path d="M2 1.6H7.5" stroke="#fff" stroke-width="0.8"/><rect x="7.6" y="5.2" width="6" height="8" rx="0.6" fill="#fff" stroke="#2c4a84" stroke-width="1.3"/></g></svg>
<svg style="left:0;top:0" width="1" height="1"><path d="M1054 206L1066.4 218.4M1066.4 206L1054 218.4" stroke="#e8141c" stroke-width="2.7" fill="none"/></svg>
<svg style="left:0;top:0" width="1" height="1"><path d="M1089.5 218L1093.5 205.5M1096.5 218L1100.5 205.5" stroke="#2c4a84" stroke-width="2.7" fill="none"/></svg>
<svg style="left:0;top:0" width="1" height="1"><rect x="1123.5" y="205.8" width="13" height="12.4" fill="#fff" stroke="#2c4a84" stroke-width="1"/><rect x="1127.6" y="205.8" width="4.8" height="12.4" fill="#2c4a84" opacity="0.85"/><path d="M1123.5 209h4M1123.5 212h4M1123.5 215h4M1132.5 209h4M1132.5 212h4M1132.5 215h4" stroke="#2c4a84" stroke-width="1"/></svg>
<svg style="left:0;top:0" width="1" height="1"><g fill="none" stroke="#2c4a84" stroke-width="1.3"><path d="M1162.2 214.5C1159 212 1159.2 206 1164.8 205.8C1170.4 206 1170.6 212 1167.4 214.5Z"/><path d="M1162.6 216.6H1167M1163.2 218.6H1166.4"/></g></svg>
<svg style="left:0;top:0" width="1" height="1"><path d="M1904.89,210.76 L1904.89,213.24 L1903.18,213.34 L1902.55,214.86 L1903.69,216.14 L1901.94,217.89 L1900.66,216.75 L1899.14,217.38 L1899.04,219.09 L1896.56,219.09 L1896.46,217.38 L1894.94,216.75 L1893.66,217.89 L1891.91,216.14 L1893.05,214.86 L1892.42,213.34 L1890.71,213.24 L1890.71,210.76 L1892.42,210.66 L1893.05,209.14 L1891.91,207.86 L1893.66,206.11 L1894.94,207.25 L1896.46,206.62 L1896.56,204.91 L1899.04,204.91 L1899.14,206.62 L1900.66,207.25 L1901.94,206.11 L1903.69,207.86 L1902.55,209.14 L1903.18,210.66ZM1900.18,212A2.38,2.38 0 1 0 1895.42,212A2.38,2.38 0 1 0 1900.18,212Z" fill="#2c4a84" fill-rule="evenodd"/></svg>
<div class="b" style="left:798px;top:228px;width:1117px;height:2px;background:#e8e8e8"></div>
<div class="b" style="left:851px;top:689px;width:1040px;height:17px;background:#fffcd6"></div>
<div class="b" style="left:835px;top:230px;width:1px;height:508px;background:repeating-linear-gradient(180deg,#7a7a7a 0 3px,transparent 3px 7px)"></div>
<div class="a mono" style="left:805px;top:233px;color:#979797">642</div>
<div class="a mono" style="left:851px;top:233px">     slv_reg16 <span class="kw">when</span> (axi_araddr(ADDR_LSB+OPT_MEM_ADDR_BITS <span class="kw">downto</span> ADDR_LSB) = <span class="num">"10000"</span> ) <span class="kw">else</span></div>
<div class="a mono" style="left:805px;top:250px;color:#979797">643</div>
<div class="a mono" style="left:851px;top:250px">     slv_reg17 <span class="kw">when</span> (axi_araddr(ADDR_LSB+OPT_MEM_ADDR_BITS <span class="kw">downto</span> ADDR_LSB) = <span class="num">"10001"</span> ) <span class="kw">else</span></div>
<div class="a mono" style="left:805px;top:267px;color:#979797">644</div>
<div class="a mono" style="left:851px;top:267px">     slv_reg18 <span class="kw">when</span> (axi_araddr(ADDR_LSB+OPT_MEM_ADDR_BITS <span class="kw">downto</span> ADDR_LSB) = <span class="num">"10010"</span> ) <span class="kw">else</span></div>
<div class="a mono" style="left:805px;top:284px;color:#979797">645</div>
<div class="a mono" style="left:851px;top:284px">     slv_reg19 <span class="kw">when</span> (axi_araddr(ADDR_LSB+OPT_MEM_ADDR_BITS <span class="kw">downto</span> ADDR_LSB) = <span class="num">"10011"</span> ) <span class="kw">else</span></div>
<div class="a mono" style="left:805px;top:301px;color:#979797">646</div>
<div class="a mono" style="left:851px;top:301px">     slv_reg20 <span class="kw">when</span> (axi_araddr(ADDR_LSB+OPT_MEM_ADDR_BITS <span class="kw">downto</span> ADDR_LSB) = <span class="num">"10100"</span> ) <span class="kw">else</span></div>
<div class="a mono" style="left:805px;top:318px;color:#979797">647</div>
<div class="a mono" style="left:851px;top:318px">     slv_reg21 <span class="kw">when</span> (axi_araddr(ADDR_LSB+OPT_MEM_ADDR_BITS <span class="kw">downto</span> ADDR_LSB) = <span class="num">"10101"</span> ) <span class="kw">else</span></div>
<div class="a mono" style="left:805px;top:335px;color:#979797">648</div>
<div class="a mono" style="left:851px;top:335px">     slv_reg22 <span class="kw">when</span> (axi_araddr(ADDR_LSB+OPT_MEM_ADDR_BITS <span class="kw">downto</span> ADDR_LSB) = <span class="num">"10110"</span> ) <span class="kw">else</span></div>
<div class="a mono" style="left:805px;top:352px;color:#979797">649</div>
<div class="a mono" style="left:851px;top:352px">     slv_reg23 <span class="kw">when</span> (axi_araddr(ADDR_LSB+OPT_MEM_ADDR_BITS <span class="kw">downto</span> ADDR_LSB) = <span class="num">"10111"</span> ) <span class="kw">else</span></div>
<div class="a mono" style="left:805px;top:369px;color:#979797">650</div>
<div class="a mono" style="left:851px;top:369px">     slv_reg24 <span class="kw">when</span> (axi_araddr(ADDR_LSB+OPT_MEM_ADDR_BITS <span class="kw">downto</span> ADDR_LSB) = <span class="num">"11000"</span> ) <span class="kw">else</span></div>
<div class="a mono" style="left:805px;top:386px;color:#979797">651</div>
<div class="a mono" style="left:851px;top:386px">     slv_reg25 <span class="kw">when</span> (axi_araddr(ADDR_LSB+OPT_MEM_ADDR_BITS <span class="kw">downto</span> ADDR_LSB) = <span class="num">"11001"</span> ) <span class="kw">else</span></div>
<div class="a mono" style="left:805px;top:403px;color:#979797">652</div>
<div class="a mono" style="left:851px;top:403px">     slv_reg26 <span class="kw">when</span> (axi_araddr(ADDR_LSB+OPT_MEM_ADDR_BITS <span class="kw">downto</span> ADDR_LSB) = <span class="num">"11010"</span> ) <span class="kw">else</span></div>
<div class="a mono" style="left:805px;top:420px;color:#979797">653</div>
<div class="a mono" style="left:851px;top:420px">     slv_reg27 <span class="kw">when</span> (axi_araddr(ADDR_LSB+OPT_MEM_ADDR_BITS <span class="kw">downto</span> ADDR_LSB) = <span class="num">"11011"</span> ) <span class="kw">else</span></div>
<div class="a mono" style="left:805px;top:437px;color:#979797">654</div>
<div class="a mono" style="left:851px;top:437px">     slv_reg28 <span class="kw">when</span> (axi_araddr(ADDR_LSB+OPT_MEM_ADDR_BITS <span class="kw">downto</span> ADDR_LSB) = <span class="num">"11100"</span> ) <span class="kw">else</span></div>
<div class="a mono" style="left:805px;top:454px;color:#979797">655</div>
<div class="a mono" style="left:851px;top:454px">     slv_reg29 <span class="kw">when</span> (axi_araddr(ADDR_LSB+OPT_MEM_ADDR_BITS <span class="kw">downto</span> ADDR_LSB) = <span class="num">"11101"</span> ) <span class="kw">else</span></div>
<div class="a mono" style="left:805px;top:471px;color:#979797">656</div>
<div class="a mono" style="left:851px;top:471px">     slv_reg30 <span class="kw">when</span> (axi_araddr(ADDR_LSB+OPT_MEM_ADDR_BITS <span class="kw">downto</span> ADDR_LSB) = <span class="num">"11110"</span> ) <span class="kw">else</span></div>
<div class="a mono" style="left:805px;top:488px;color:#979797">657</div>
<div class="a mono" style="left:851px;top:488px">     slv_reg31 <span class="kw">when</span> (axi_araddr(ADDR_LSB+OPT_MEM_ADDR_BITS <span class="kw">downto</span> ADDR_LSB) = <span class="num">"11111"</span> ) <span class="kw">else</span></div>
<div class="a mono" style="left:805px;top:505px;color:#979797">658</div>
<div class="a mono" style="left:851px;top:505px">     (<span class="kw">others</span> =&gt; '0');</div>
<div class="a mono" style="left:805px;top:522px;color:#979797">659</div>
<div class="a mono" style="left:805px;top:539px;color:#979797">660</div>
<div class="a mono" style="left:851px;top:539px"><span class="cm">    -- Add user logic here</span></div>
<div class="a mono" style="left:805px;top:556px;color:#979797">661</div>
<div class="a mono" style="left:851px;top:556px">    <span class="lbl">counter:</span> lec10</div>
<div class="a mono" style="left:805px;top:573px;color:#979797">662</div>
<div class="a mono" style="left:851px;top:573px">    <span class="kw">generic</span> <span class="kw">map</span> (8)</div>
<div class="a mono" style="left:805px;top:590px;color:#979797">663</div>
<div class="a mono" style="left:851px;top:590px">    <span class="kw">port</span> <span class="kw">map</span>(</div>
<div class="a mono" style="left:805px;top:607px;color:#979797">664</div>
<div class="a mono" style="left:851px;top:607px">        clk =&gt; S_AXI_ACLK,</div>
<div class="a mono" style="left:805px;top:624px;color:#979797">665</div>
<div class="a mono" style="left:851px;top:624px">        reset_n =&gt; S_AXI_ARESETN,</div>
<div class="a mono" style="left:805px;top:641px;color:#979797">666</div>
<div class="a mono" style="left:851px;top:641px">        ctrl =&gt;    slv_reg1(1 <span class="kw">downto</span> 0),</div>
<div class="a mono" style="left:805px;top:658px;color:#979797">667</div>
<div class="a mono" style="left:851px;top:658px">        D =&gt; <span class="kw">unsigned</span>(slv_reg0(7 <span class="kw">downto</span> 0)),</div>
<div class="a mono" style="left:805px;top:675px;color:#979797">668</div>
<div class="a mono" style="left:851px;top:675px">        Q =&gt; Q);</div>
<div class="a mono" style="left:805px;top:692px;color:#979797">669</div>
<div class="a mono" style="left:851px;top:692px">    LED &lt;= <span class="kw">std_logic_vector</span>(Q);</div>
<div class="a mono" style="left:805px;top:709px;color:#979797">670</div>
<div class="a mono" style="left:851px;top:709px"><span class="cm">    -- User logic ends</span></div>
<div class="a mono" style="left:805px;top:726px;color:#979797">671</div>
<div class="b" style="left:1068px;top:689px;width:2px;height:17px;background:#000"></div>
<svg style="left:0;top:0" width="1" height="1"><path d="M831.0 556.5H840.0V563.5L835.5 567.5L831.0 563.5Z" fill="#fff" stroke="#8a8a8a" stroke-width="1" stroke-linejoin="round"/><path d="M833.0 560.5H838.0" stroke="#8a8a8a" stroke-width="1"/></svg>
<svg style="left:0;top:0" width="1" height="1"><path d="M831.0 686.5H840.0V679.5L835.5 675.5L831.0 679.5Z" fill="#fff" stroke="#8a8a8a" stroke-width="1" stroke-linejoin="round"/><path d="M833.0 682.5H838.0" stroke="#8a8a8a" stroke-width="1"/></svg>
<div class="b" style="left:1891px;top:230px;width:14px;height:508px;background:#fafafa;border-left:1px solid #ececec"></div>
<svg style="left:0;top:0" width="1" height="1"><path d="M1893.8 240L1898.3 235.8L1902.8 240" stroke="#5a5a5a" stroke-width="2.1" fill="none"/><path d="M1893.8 729.8L1898.3 734.0L1902.8 729.8" stroke="#5a5a5a" stroke-width="2.1" fill="none"/></svg>
<div class="b" style="left:1894.55px;top:685px;width:7.5px;height:33.39999999999998px;background:#c1c1c1;border-radius:3.75px"></div>
<div class="b" style="left:1905px;top:230px;width:10px;height:10px;background:#08f208"></div>
<div class="b" style="left:851px;top:738px;width:1040px;height:14px;background:#fafafa;border-top:1px solid #ececec"></div>
<svg style="left:0;top:0" width="1" height="1"><path d="M861.4 741.1999999999999L857 745.8L861.4 750.4" stroke="#5a5a5a" stroke-width="2.1" fill="none"/><path d="M1882.6 741.1999999999999L1887 745.8L1882.6 750.4" stroke="#5a5a5a" stroke-width="2.1" fill="none"/></svg>
<div class="b" style="left:868px;top:741px;width:633px;height:8px;background:#c1c1c1;border-radius:4px"></div>
<div class="b" style="left:273px;top:768px;width:1644px;height:249px;background:#e8e8e8;border:1px solid #c9c9c9"></div>
<div class="b" style="left:276px;top:771px;width:1638px;height:28px;background:#eeeeee"></div>
<div class="b" style="left:276px;top:799px;width:1638px;height:32px;background:#fff"></div>
<div class="b" style="left:276px;top:855px;width:1638px;height:145px;background:#fff"></div>
<div class="b" style="left:555px;top:771px;width:114px;height:28px;background:#fff"></div>
<div class="a" style="left:282.00px;top:778.00px;font-weight:bold;transform:scaleX(0.9791);transform-origin:0 0;color:#8c8c8c;">Tcl Console</div>
<div class="a" style="left:370.00px;top:778.00px;font-weight:bold;transform:scaleX(1.0218);transform-origin:0 0;color:#8c8c8c;">Messages</div>
<div class="a" style="left:451.40px;top:778.00px;font-weight:bold;transform:scaleX(0.9045);transform-origin:0 0;color:#8c8c8c;">Log</div>
<div class="a" style="left:494.00px;top:778.00px;font-weight:bold;transform:scaleX(0.9813);transform-origin:0 0;color:#8c8c8c;">Reports</div>
<div class="a" style="left:561.40px;top:778.00px;font-weight:bold;transform:scaleX(0.9543);transform-origin:0 0;">Design Runs</div>
<div class="b" style="left:363px;top:771px;width:1px;height:24px;background:#c6c6c6"></div>
<div class="b" style="left:444px;top:771px;width:1px;height:24px;background:#c6c6c6"></div>
<div class="b" style="left:487px;top:771px;width:1px;height:24px;background:#c6c6c6"></div>
<svg style="left:0;top:0" width="1" height="1"><path d="M654 782.3L661.6 789.9M661.6 782.3L654 789.9" stroke="#6a6a6a" stroke-width="1.3" fill="none"/></svg>
<div class="a" style="left:1837.00px;top:778.21px;font-size:14px;font-weight:bold;transform:scaleX(0.9850);transform-origin:0 0;color:#8f8f8f;">?</div>
<div class="b" style="left:1856px;top:788px;width:10px;height:2px;background:#8f8f8f"></div>
<svg style="left:0;top:0" width="1" height="1"><rect x="1876.95" y="781.05" width="8.5" height="8.5" fill="none" stroke="#8f8f8f" stroke-width="1.5"/></svg>
<svg style="left:0;top:0" width="1" height="1"><path d="M1900.4 781.05H1896.95V789.55H1905.45V786.3" fill="none" stroke="#8f8f8f" stroke-width="1.5"/><path d="M1901.4 785.0999999999999L1905.2 781.3M1902.2 780.6999999999999H1905.8V784.3" fill="none" stroke="#8f8f8f" stroke-width="1.3"/></svg>
<div class="b" style="left:310px;top:805px;width:1px;height:20px;background:#d4d4d4"></div>
<div class="b" style="left:345px;top:805px;width:1px;height:20px;background:#d4d4d4"></div>
<div class="b" style="left:380px;top:805px;width:1px;height:20px;background:#d4d4d4"></div>
<div class="b" style="left:415px;top:805px;width:1px;height:20px;background:#d4d4d4"></div>
<div class="b" style="left:450px;top:805px;width:1px;height:20px;background:#d4d4d4"></div>
<div class="b" style="left:485px;top:805px;width:1px;height:20px;background:#d4d4d4"></div>
<div class="b" style="left:520px;top:805px;width:1px;height:20px;background:#d4d4d4"></div>
<div class="b" style="left:555px;top:805px;width:1px;height:20px;background:#d4d4d4"></div>
<div class="b" style="left:590px;top:805px;width:1px;height:20px;background:#d4d4d4"></div>
<svg style="left:0;top:0" width="1" height="1"><circle cx="291.9" cy="814.4" r="5" fill="none" stroke="#2c4a84" stroke-width="1.8"/><path d="M296 818.5L299.2 821.3" stroke="#2c4a84" stroke-width="2.6" stroke-linecap="round"/></svg>
<svg style="left:0;top:0" width="1" height="1"><g fill="#2c4a84"><path d="M322.5 808h11l-5.5 5z"/><rect x="322.5" y="814.2" width="11" height="1.7"/><path d="M322.5 822h11l-5.5 -5z"/></g></svg>
<svg style="left:0;top:0" width="1" height="1"><g fill="#2c4a84"><path d="M357 813h11.6l-5.8 -5z"/><rect x="357" y="814.2" width="11.6" height="1.7"/><path d="M357 817h11.6l-5.8 5z"/></g></svg>
<svg style="left:0;top:0" width="1" height="1"><g fill="#c4c4c4"><rect x="392" y="808.5" width="2.6" height="13"/><path d="M404.4 808.5V821.5L396 815Z"/></g></svg>
<svg style="left:0;top:0" width="1" height="1"><path d="M432.5 809.5L427.5 815L432.5 820.5M439 809.5L434 815L439 820.5" stroke="#c4c4c4" stroke-width="2.3" fill="none"/></svg>
<svg style="left:0;top:0" width="1" height="1"><path d="M462.5 808.5L473.3 815L462.5 821.5Z" fill="#c4c4c4"/></svg>
<svg style="left:0;top:0" width="1" height="1"><path d="M497 809.5L502 815L497 820.5M503.5 809.5L508.5 815L503.5 820.5" stroke="#c4c4c4" stroke-width="2.3" fill="none"/></svg>
<svg style="left:0;top:0" width="1" height="1"><path d="M531 815.0H545M538.0 808V822" stroke="#2c4a84" stroke-width="2.4" fill="none"/></svg>
<div class="a" style="left:566px;top:805px;font-size:17px;line-height:20px;color:#2c4a84;-webkit-text-stroke:0.4px #2c4a84">%</div>
<div class="b" style="left:276px;top:831px;width:1638px;height:24px;background:#ececec"></div>
<div class="b" style="left:383px;top:833px;width:1px;height:22px;background:#dedede"></div>
<div class="b" style="left:383px;top:855px;width:1px;height:46px;background:#e2e2e2"></div>
<div class="b" style="left:465px;top:833px;width:1px;height:22px;background:#dedede"></div>
<div class="b" style="left:465px;top:855px;width:1px;height:46px;background:#e2e2e2"></div>
<div class="b" style="left:553px;top:833px;width:1px;height:22px;background:#dedede"></div>
<div class="b" style="left:553px;top:855px;width:1px;height:46px;background:#e2e2e2"></div>
<div class="b" style="left:599px;top:833px;width:1px;height:22px;background:#dedede"></div>
<div class="b" style="left:599px;top:855px;width:1px;height:46px;background:#e2e2e2"></div>
<div class="b" style="left:641px;top:833px;width:1px;height:22px;background:#dedede"></div>
<div class="b" style="left:641px;top:855px;width:1px;height:46px;background:#e2e2e2"></div>
<div class="b" style="left:687px;top:833px;width:1px;height:22px;background:#dedede"></div>
<div class="b" style="left:687px;top:855px;width:1px;height:46px;background:#e2e2e2"></div>
<div class="b" style="left:729px;top:833px;width:1px;height:22px;background:#dedede"></div>
<div class="b" style="left:729px;top:855px;width:1px;height:46px;background:#e2e2e2"></div>
<div class="b" style="left:782px;top:833px;width:1px;height:22px;background:#dedede"></div>
<div class="b" style="left:782px;top:855px;width:1px;height:46px;background:#e2e2e2"></div>
<div class="b" style="left:834px;top:833px;width:1px;height:22px;background:#dedede"></div>
<div class="b" style="left:834px;top:855px;width:1px;height:46px;background:#e2e2e2"></div>
<div class="b" style="left:917px;top:833px;width:1px;height:22px;background:#dedede"></div>
<div class="b" style="left:917px;top:855px;width:1px;height:46px;background:#e2e2e2"></div>
<div class="b" style="left:1012px;top:833px;width:1px;height:22px;background:#dedede"></div>
<div class="b" style="left:1012px;top:855px;width:1px;height:46px;background:#e2e2e2"></div>
<div class="b" style="left:1099px;top:833px;width:1px;height:22px;background:#dedede"></div>
<div class="b" style="left:1099px;top:855px;width:1px;height:46px;background:#e2e2e2"></div>
<div class="b" style="left:1177px;top:833px;width:1px;height:22px;background:#dedede"></div>
<div class="b" style="left:1177px;top:855px;width:1px;height:46px;background:#e2e2e2"></div>
<div class="b" style="left:1293px;top:833px;width:1px;height:22px;background:#dedede"></div>
<div class="b" style="left:1293px;top:855px;width:1px;height:46px;background:#e2e2e2"></div>
<div class="b" style="left:1334px;top:833px;width:1px;height:22px;background:#dedede"></div>
<div class="b" style="left:1334px;top:855px;width:1px;height:46px;background:#e2e2e2"></div>
<div class="b" style="left:1366px;top:833px;width:1px;height:22px;background:#dedede"></div>
<div class="b" style="left:1366px;top:855px;width:1px;height:46px;background:#e2e2e2"></div>
<div class="b" style="left:1417px;top:833px;width:1px;height:22px;background:#dedede"></div>
<div class="b" style="left:1417px;top:855px;width:1px;height:46px;background:#e2e2e2"></div>
<div class="b" style="left:1469px;top:833px;width:1px;height:22px;background:#dedede"></div>
<div class="b" style="left:1469px;top:855px;width:1px;height:46px;background:#e2e2e2"></div>
<div class="b" style="left:1512px;top:833px;width:1px;height:22px;background:#dedede"></div>
<div class="b" style="left:1512px;top:855px;width:1px;height:46px;background:#e2e2e2"></div>
<div class="b" style="left:1555px;top:833px;width:1px;height:22px;background:#dedede"></div>
<div class="b" style="left:1555px;top:855px;width:1px;height:46px;background:#e2e2e2"></div>
<div class="b" style="left:1619px;top:833px;width:1px;height:22px;background:#dedede"></div>
<div class="b" style="left:1619px;top:855px;width:1px;height:46px;background:#e2e2e2"></div>
<div class="b" style="left:276px;top:877px;width:1638px;height:1px;background:#e2e2e2"></div>
<div class="b" style="left:276px;top:900px;width:1638px;height:1px;background:#e2e2e2"></div>
<div class="a" style="left:283.20px;top:837.60px;letter-spacing:0.400px;">Name</div>
<div class="a" style="left:391.20px;top:837.60px;letter-spacing:0.230px;">Constraints</div>
<div class="a" style="left:473.30px;top:837.60px;letter-spacing:-0.020px;">Status</div>
<div class="a" style="left:561.00px;top:837.60px;letter-spacing:-0.100px;">WNS</div>
<div class="a" style="left:607.40px;top:837.60px;letter-spacing:-0.300px;">TNS</div>
<div class="a" style="left:649.00px;top:837.60px;letter-spacing:-0.150px;">WHS</div>
<div class="a" style="left:695.20px;top:837.60px;letter-spacing:-0.150px;">THS</div>
<div class="a" style="left:737.10px;top:837.60px;letter-spacing:-0.150px;">WBSS</div>
<div class="a" style="left:789.90px;top:837.60px;letter-spacing:-0.150px;">TPWS</div>
<div class="a" style="left:842.20px;top:837.60px;letter-spacing:0.210px;">Total Power</div>
<div class="a" style="left:925.20px;top:837.60px;letter-spacing:0.171px;">Failed Routes</div>
<div class="a" style="left:1020.30px;top:837.60px;letter-spacing:0.050px;">Methodology</div>
<div class="a" style="left:1107.30px;top:837.60px;letter-spacing:-0.106px;">RQA Score</div>
<div class="a" style="left:1185.10px;top:837.60px;letter-spacing:0.232px;">QoR Suggestions</div>
<div class="a" style="left:1301.00px;top:837.60px;letter-spacing:-0.150px;">LUT</div>
<div class="a" style="left:1342.00px;top:837.60px;letter-spacing:-0.150px;">FF</div>
<div class="a" style="left:1374.00px;top:837.60px;letter-spacing:-0.150px;">BRAM</div>
<div class="a" style="left:1425.00px;top:837.60px;letter-spacing:-0.150px;">URAM</div>
<div class="a" style="left:1477.00px;top:837.60px;letter-spacing:-0.150px;">DSP</div>
<div class="a" style="left:1520.20px;top:837.60px;letter-spacing:0.160px;">Start</div>
<div class="a" style="left:1563.40px;top:837.60px;letter-spacing:0.160px;">Elapsed</div>
<div class="a" style="left:1627.40px;top:837.60px;letter-spacing:-0.005px;">Run Strategy</div>
<svg style="left:0;top:0" width="1" height="1"><path d="M282.2 864.5L286.4 868.7L290.59999999999997 864.5" stroke="#555" stroke-width="1.2" fill="none"/></svg>
<svg style="left:0;top:0" width="1" height="1"><path d="M300.6 861.3L309 866.6L300.6 871.9Z" fill="none" stroke="#a6a6a6" stroke-width="1"/></svg>
<svg style="left:0;top:0" width="1" height="1"><path d="M316.4 884.3L324.8 889.6L316.4 894.9Z" fill="none" stroke="#a6a6a6" stroke-width="1"/></svg>
<div class="a" style="left:317.50px;top:859.50px;letter-spacing:-0.092px;">synth_1</div>
<div class="a" style="left:391.40px;top:859.50px;letter-spacing:0.256px;">constrs_1</div>
<div class="a" style="left:473.30px;top:859.50px;letter-spacing:0.100px;">Not started</div>
<div class="a" style="left:333.30px;top:882.50px;letter-spacing:0.410px;">impl_1</div>
<div class="a" style="left:391.40px;top:882.50px;letter-spacing:0.256px;">constrs_1</div>
<div class="a" style="left:473.30px;top:882.50px;letter-spacing:0.100px;">Not started</div>
<div class="a" style="left:1627.40px;top:859.50px;letter-spacing:0.090px;">Vivado Synthesis Defaults (Vivado Synthesis 2024)</div>
<div class="b" style="left:1620px;top:879px;width:294px;height:20px;overflow:hidden">
<div class="a" style="left:7.40px;top:3.50px;letter-spacing:0.130px;">Vivado Implementation Defaults (Vivado Implementation 2024)</div>
</div>
<div class="b" style="left:276px;top:1000px;width:1638px;height:13px;background:#fafafa;border-top:1px solid #e6e6e6"></div>
<svg style="left:0;top:0" width="1" height="1"><path d="M286.4 1003.1999999999999L282 1007.8L286.4 1012.4" stroke="#5a5a5a" stroke-width="2.1" fill="none"/><path d="M1905.6 1003.1999999999999L1910 1007.8L1905.6 1012.4" stroke="#5a5a5a" stroke-width="2.1" fill="none"/></svg>
<div class="b" style="left:293px;top:1003px;width:1076px;height:8px;background:#c1c1c1;border-radius:4px"></div>
<div class="b" style="left:8px;top:1020px;width:1912px;height:12px;overflow:hidden;background:#eeeeee">
<div class="a" style="left:1717.50px;top:3.80px;letter-spacing:0.200px;">669:32</div>
<div class="a" style="left:1803.00px;top:3.80px;letter-spacing:0.260px;">Insert</div>
<div class="a" style="left:1863.70px;top:3.80px;letter-spacing:-1.033px;">VHDL</div>
</div>
<div class="b" style="left:0px;top:1032px;width:1920px;height:48px;background:linear-gradient(90deg,#dde3d6 0%,#dfe5d9 20%,#dee6df 40%,#e0e5e1 58%,#e6e1e0 75%,#e9dfe1 100%);border-top:1px solid #b9b9b9"></div>
<svg style="left:0;top:0" width="1" height="1"><rect x="16" y="1045" width="24" height="22" rx="1.5" fill="#0d62c4"/><rect x="18" y="1047" width="9" height="18" rx="1" fill="#f4f4f4"/><rect x="29" y="1047" width="9" height="11" fill="#4aa8f4"/><rect x="29" y="1058" width="9" height="7" fill="#1f8ef0"/></svg>
<svg style="left:0;top:0" width="1" height="1"><defs><linearGradient id="wg" x1="0" y1="0" x2="1" y2="1"><stop offset="0" stop-color="#38b4f4"/><stop offset="1" stop-color="#0a74d2"/></linearGradient></defs><g fill="url(#wg)"><rect x="663" y="1044.7" width="11.1" height="11.1"/><rect x="675.2" y="1044.7" width="11.1" height="11.1"/><rect x="663" y="1056.9" width="11.1" height="11.1"/><rect x="675.2" y="1056.9" width="11.1" height="11.1"/></g></svg>
<svg style="left:0;top:0" width="1" height="1"><circle cx="717.3" cy="1054.8" r="8.3" fill="none" stroke="#202020" stroke-width="2.3"/><path d="M723.4 1061L729 1066.4" stroke="#202020" stroke-width="2.6" stroke-linecap="round"/></svg>
<svg style="left:0;top:0" width="1" height="1"><defs><linearGradient id="tv" x1="0" y1="0" x2="0.6" y2="1"><stop offset="0" stop-color="#ffffff"/><stop offset="1" stop-color="#b8b8b8"/></linearGradient></defs><rect x="751.2" y="1051.2" width="17.6" height="15.6" rx="1.2" fill="#242424"/><rect x="756.8" y="1045" width="18" height="15.6" rx="1.2" fill="url(#tv)"/></svg>
<svg style="left:0;top:0" width="1" height="1"><defs><linearGradient id="ch" x1="0" y1="0" x2="1" y2="1"><stop offset="0" stop-color="#6a62d0"/><stop offset="1" stop-color="#a070e6"/></linearGradient></defs><path d="M806.7 1044.3a11.5 11.5 0 1 1 -7.5 20.2l-4 2.2l1.2-4.8a11.5 11.5 0 0 1 10.3-17.6z" fill="url(#ch)"/><rect x="800" y="1051" width="9.6" height="9" rx="1.6" fill="#fff"/><path d="M810.4 1055.5l3.6-2.6v5.2z" fill="#fff"/></svg>
<svg style="left:0;top:0" width="1" height="1"><path d="M839 1047.2q0-1.8 1.8-1.8h6l2 2.2h12.6q1.6 0 1.6 1.6v15.4q0 1.6-1.6 1.6h-20.8q-1.6 0-1.6-1.6z" fill="#f7c64a"/><path d="M839 1047.2q0-1.8 1.8-1.8h6l2 2.2h-9.8z" fill="#d99a2a"/><rect x="839" y="1049.5" width="24" height="4" fill="#fbd66a"/><path d="M843.4 1060.4q0-1.4 1.4-1.4h12q1.4 0 1.4 1.4v5.8h-14.8z" fill="#1c86de"/><rect x="845.5" y="1060.6" width="10.6" height="1.6" rx="0.8" fill="#7cc4f8"/></svg>
<svg style="left:0;top:0" width="1" height="1"><path d="M888 1050v-2.6q0-2 2-2h9q2 0 2 2v2.6" fill="none" stroke="#3aa4ee" stroke-width="1.8"/><path d="M883 1051.6q0-1.8 1.8-1.8h19.4q1.8 0 1.8 1.8v13q0 3.4-3.4 3.4h-16.2q-3.4 0-3.4-3.4z" fill="#1b4f8e"/><rect x="889.6" y="1054.2" width="4.3" height="4.3" fill="#f25022"/><rect x="894.9" y="1054.2" width="4.3" height="4.3" fill="#7fba00"/><rect x="889.6" y="1059.5" width="4.3" height="4.3" fill="#00a4ef"/><rect x="894.9" y="1059.5" width="4.3" height="4.3" fill="#ffb900"/></svg>
<svg style="left:0;top:0" width="1" height="1"><g transform="translate(939.2,1055.8)"><circle r="12" fill="#fbc116"/><path d="M0 0L-10.39 -6A12 12 0 0 1 10.39 -6Z" fill="#e33b2e"/><path d="M0 0L10.39 -6L-10.39 -6Z" fill="#e33b2e"/><path d="M0 0L-10.39 -6A12 12 0 0 0 0 12Z" fill="#2da94f"/><path d="M-10.39 -6A12 12 0 0 1 10.39 -6L0 -6Z" fill="#e33b2e"/><circle r="5.6" fill="#fff"/><circle r="4.4" fill="#3d7ee8"/></g></svg>
<svg style="left:0;top:0" width="1" height="1"><circle cx="982.8" cy="1055.8" r="10.2" fill="#5a2db6"/></svg>
<div class="a" style="left:976.3px;top:1046.6px;font-size:16px;line-height:18px;font-weight:bold;color:#fff">S</div>
<svg style="left:0;top:0" width="1" height="1"><circle cx="1026.7" cy="1055.8" r="11.2" fill="#fff"/><path d="M1019.6 1054.4q0-5 7.2-5t7.2 5q0 4.8-7.2 4.8h-2.2l-2.6 2.6v-3.4q-2.4-1.2-2.4-4z" fill="#2a7ce0"/></svg>
<svg style="left:0;top:0" width="1" height="1"><circle cx="1070.8" cy="1055.8" r="11.6" fill="#b03fd8"/><path d="M1071.2 1054.6L1072.2 1066.4L1074.8 1063.6L1077 1067.8L1078.8 1066.8L1076.6 1062.8L1080.2 1062.2Z" fill="#fff"/><path d="M1068 1051.5l-2.4-2.4M1070.4 1050.4v-3.2M1066.8 1054h-3.2" stroke="#fff" stroke-width="1.2"/></svg>
<svg style="left:0;top:0" width="1" height="1"><circle cx="1119.5" cy="1050.5" r="4.2" fill="#7b83eb"/><path d="M1112 1054.5h13.6q1.2 0 1.2 1.2v6q0 5.2-6.4 5.2t-8.4-5.2z" fill="#7b83eb"/><circle cx="1113" cy="1049.6" r="3" fill="#5059c9"/><rect x="1103" y="1050" width="13.4" height="12.6" rx="1.2" fill="#4b53bc"/><path d="M1106.4 1053.4h6.6M1109.7 1053.4v6.6" stroke="#fff" stroke-width="1.7"/><circle cx="1124.2" cy="1046.8" r="8" fill="#cf3222"/></svg>
<div class="a" style="left:1121.4px;top:1039.5px;font-size:12px;line-height:14px;color:#fff">1</div>
<svg style="left:0;top:0" width="1" height="1"><path d="M1164 1044.4l6.6 3v16.6l-6.6 3l-11.2-10.2l-4.2 3.2l-1.8-1v-7l1.8-1l4.2 3.2z" fill="#1f9cf0"/><path d="M1164 1044.4l6.6 3v16.6l-6.6 3z" fill="#0a6fc2" opacity="0.0"/><path d="M1164 1050.8l-6.4 4.9l6.4 4.9z" fill="#e0e5e1"/><path d="M1146.8 1052l1.8-1l16 13.6v2.4z" fill="#0a6fc2" opacity="0.55"/></svg>
<div class="b" style="left:1183px;top:1037px;width:39px;height:39px;background:#f1f2ee;border-radius:4px;box-shadow:0 0 0 1px rgba(255,255,255,0.5)"></div>
<svg style="left:0;top:0" width="1" height="1"><rect x="1190.8" y="1044" width="24.4" height="24" fill="#000"/><path d="M1195.2 1047.9L1211.1 1047.9L1211.1 1063.7L1206.4 1059.3L1206.4 1052.7L1199.8 1052.7Z M1194.9 1057.4L1199.6 1053.0L1199.6 1059.0L1206.0 1059.0L1200.9 1064.1L1194.9 1064.1Z" fill="#fff"/></svg>
<div class="b" style="left:1195px;top:1072px;width:16px;height:3px;background:#1a78d8;border-radius:1.5px"></div>
<svg style="left:0;top:0" width="1" height="1"><path d="M1240.5 1046.8h17.9l-5.4 18h-17.9z" fill="#3b6fd2"/><path d="M1243.6 1050.4l5.2 4.6l-6.6 5" fill="none" stroke="#fff" stroke-width="1.7"/><path d="M1248.2 1061.2h4.8" stroke="#fff" stroke-width="1.5"/></svg>
<div class="b" style="left:848px;top:1072px;width:6px;height:3px;background:#8c8c8c;border-radius:1.5px"></div>
<div class="b" style="left:936px;top:1072px;width:6px;height:3px;background:#8c8c8c;border-radius:1.5px"></div>
<div class="b" style="left:1068px;top:1072px;width:6px;height:3px;background:#8c8c8c;border-radius:1.5px"></div>
<div class="b" style="left:1112px;top:1072px;width:6px;height:3px;background:#8c8c8c;border-radius:1.5px"></div>
<div class="b" style="left:1156px;top:1072px;width:6px;height:3px;background:#8c8c8c;border-radius:1.5px"></div>
<div class="b" style="left:1244px;top:1072px;width:6px;height:3px;background:#8c8c8c;border-radius:1.5px"></div>
<svg style="left:0;top:0" width="1" height="1"><path d="M1697 1058.8L1703 1052.8L1709 1058.8" fill="none" stroke="#222" stroke-width="1.4"/></svg>
<svg style="left:0;top:0" width="1" height="1"><defs><linearGradient id="cl" x1="0" y1="0" x2="0" y2="1"><stop offset="0" stop-color="#8a8a8a"/><stop offset="1" stop-color="#f0f0f0"/></linearGradient></defs><path d="M1722.6 1060.2q-3.6 0-3.6-3.2q0-2.6 3-3.2q0.6-3.6 4.6-3.6q3 0 4.2 2.4q4.2 0.2 4.2 3.8q0 3.8-3.8 3.8z" fill="url(#cl)" stroke="#333" stroke-width="1.1"/></svg>
<svg style="left:0;top:0" width="1" height="1"><g fill="none" stroke="#222" stroke-width="1.2"><path d="M1744.6 1055.4a6.6 6.6 0 0 1 12.6-2.6"/><path d="M1757.6 1048.8v4.4h-4.4"/><path d="M1751 1062.8a6.6 6.6 0 0 1 -6.2 -3.6"/><path d="M1744.4 1063.4v-4.4h4.4"/></g><circle cx="1755" cy="1060" r="4" fill="#f1000f"/></svg>
<svg style="left:0;top:0" width="1" height="1"><g fill="none" stroke="#222" stroke-width="1.2"><path d="M1782 1049h-10.4v11.2h11.6"/><path d="M1774 1063.4h7M1777.4 1060.4v3"/><rect x="1782.6" y="1048.8" width="3.8" height="5.6" rx="1"/><path d="M1784.5 1054.4v9.4"/></g></svg>
<svg style="left:0;top:0" width="1" height="1"><g fill="none" stroke="#222" stroke-width="1.2"><path d="M1795.6 1053.4h2.6l3.6-3.4v11.4l-3.6-3.4h-2.6z"/><path d="M1804 1052.6q2 3 0 6.2M1806.4 1050.8q3.2 4.8 0 9.8M1808.8 1049.2q4.4 6.4 0 13"/></g></svg>
<div class="a" style="left:1828.30px;top:1041.25px;font-size:11px;letter-spacing:0.200px;color:#1a1a1a;">12:05 AM</div>
<div class="a" style="left:1829.00px;top:1056.65px;font-size:11px;letter-spacing:0.629px;color:#1a1a1a;">3/5/2025</div>
<svg style="left:0;top:0" width="1" height="1"><path d="M1887 1060.4q1.6-1.4 1.6-5q0-5 4-5.6q4 0.6 4 5.6q0 3.6 1.6 5z" fill="#222"/><path d="M1890.6 1062q2 2.2 4 0z" fill="#222"/><path d="M1890.4 1053h2.6l-2.6 3.2h2.6M1894.8 1049.6h2.4l-2.4 2.8h2.4" fill="none" stroke="#e8e0e0" stroke-width="0.9"/></svg>
</body></html>
